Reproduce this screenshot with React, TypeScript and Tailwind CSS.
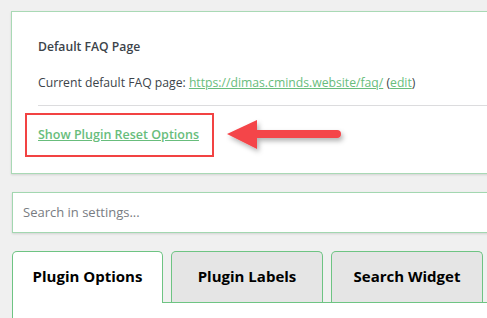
import React from "react";

export default function App() {
  return (
    <div
      className="relative w-[487px] h-[318px] overflow-hidden bg-[#f0f0f0] pl-[11px] pt-[11px]"
      style={{ fontFamily: '"Open Sans", "Noto Sans", sans-serif' }}
    >
      <div className="w-[520px] bg-white border border-[#a9d9b5] shadow-[0_1px_2px_rgba(0,0,0,0.12)] pl-[26px] pt-[26px] pb-[16px]">
        <div className="text-[12.2px] leading-[18px] font-semibold text-[#3c434a]">Default FAQ Page</div>
        <div className="mt-[18px] text-[12.2px] leading-[18px] text-[#3c434a]">
          Current default FAQ page:{" "}
          <span className="text-[#68bd7c] underline">https://dimas.cminds.website/faq/</span>{" "}
          (<span className="text-[#68bd7c] underline">edit</span>)
        </div>
        <div className="mt-[13px] h-px bg-[#dcdcde]" />
        <div className="mt-[7px] -ml-[13px] w-[189px] h-[44px] border-[2px] border-[#f24343] pl-[11px] flex items-center">
          <span className="text-[12.5px] font-semibold text-[#68bd7c] underline">Show Plugin Reset Options</span>
        </div>
      </div>

      <div className="mt-[18px] ml-px w-[520px] h-[41px] bg-white border border-[#a2d7b0] shadow-[0_1px_2px_rgba(0,0,0,0.12)] pl-[10px] flex items-center">
        <span className="text-[13px] text-[#787c82]">Search in settings...</span>
      </div>

      <div className="mt-[18px] ml-px flex w-[520px] border-b border-[#6ec483] h-[52px]">
        <div className="w-[151px] h-[52px] -mb-px bg-white border border-b-0 border-[#6ec483] rounded-t-[5px] flex justify-center pt-[13px] text-[15px] font-bold text-black">
          Plugin Options
        </div>
        <div className="ml-[8px] w-[152px] h-[51px] bg-[#e5e5e5] border border-b-0 border-[#6ec483] rounded-t-[5px] flex justify-center pt-[13px] text-[15px] font-bold text-black">
          Plugin Labels
        </div>
        <div className="ml-[8px] w-[152px] h-[51px] bg-[#e5e5e5] border border-b-0 border-[#6ec483] rounded-t-[5px] flex justify-center pt-[13px] text-[15px] font-bold text-black">
          Search Widget
        </div>
      </div>
      <div className="ml-px w-[520px] h-[20px] bg-white border-l border-[#6ec483]" />

      <svg
        className="absolute left-[226px] top-[118px]"
        width="124"
        height="44"
        viewBox="0 0 124 44"
      >
        <defs>
          <filter id="sh" x="-20%" y="-30%" width="150%" height="200%">
            <feDropShadow dx="2" dy="3" stdDeviation="2.5" floodColor="#000" floodOpacity="0.3" />
          </filter>
        </defs>
        <g filter="url(#sh)">
          <polygon points="1,16 31,2 31,31" fill="#f44448" />
          <path d="M29 12 H111 A4 4 0 0 1 111 20 H29 Z" fill="#f44448" />
        </g>
      </svg>
    </div>
  );
}
